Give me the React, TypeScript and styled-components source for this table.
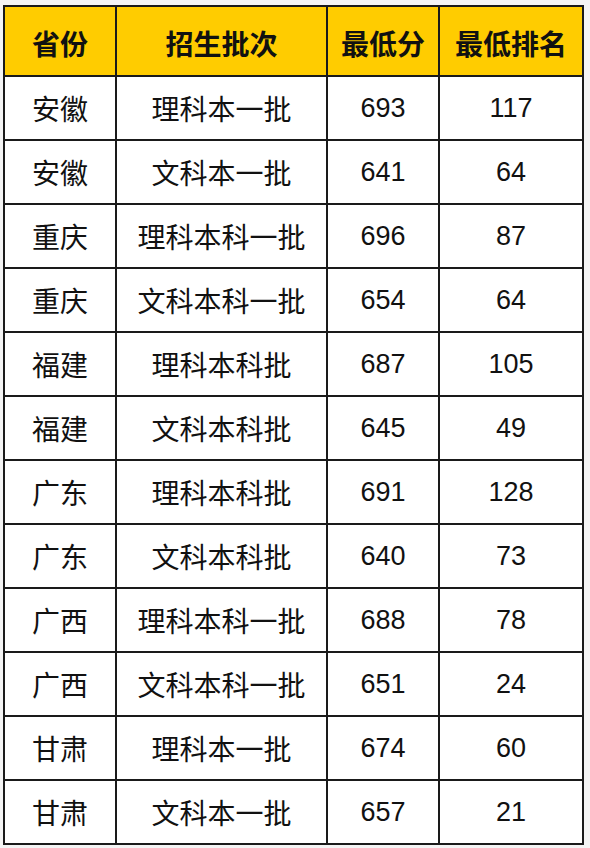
import styled, { createGlobalStyle } from 'styled-components';

const GlobalStyle = createGlobalStyle`
  html, body {
    margin: 0;
    padding: 0;
    background: #f4f4f4;
  }
  body {
    font-family: "Liberation Sans", "Noto Sans CJK SC", sans-serif;
  }
`;

const Page = styled.div`
  padding: 5px 6px 4px 3px;
  width: 590px;
  box-sizing: border-box;
`;

const Table = styled.table`
  border-collapse: collapse;
  width: 581px;
  background: #ffffff;
  border: 2px solid #1a1a1a;
`;

const HeadCell = styled.th`
  background: #ffcc00;
  height: 70px;
  padding: 4px 0 0;
  box-sizing: border-box;
  border: 2px solid #1a1a1a;
  font-size: 28px;
  font-weight: 700;
  color: #111;
  text-align: center;
`;

const Cell = styled.td<{ $num?: boolean }>`
  height: 64px;
  padding: 0;
  box-sizing: border-box;
  border: 2px solid #1a1a1a;
  font-size: ${(p) => (p.$num ? '27px' : '28px')};
  color: #111;
  text-align: center;
`;

const rows: [string, string, number, number][] = [
  ['安徽', '理科本一批', 693, 117],
  ['安徽', '文科本一批', 641, 64],
  ['重庆', '理科本科一批', 696, 87],
  ['重庆', '文科本科一批', 654, 64],
  ['福建', '理科本科批', 687, 105],
  ['福建', '文科本科批', 645, 49],
  ['广东', '理科本科批', 691, 128],
  ['广东', '文科本科批', 640, 73],
  ['广西', '理科本科一批', 688, 78],
  ['广西', '文科本科一批', 651, 24],
  ['甘肃', '理科本一批', 674, 60],
  ['甘肃', '文科本一批', 657, 21],
];

export default function App() {
  return (
    <Page>
      <GlobalStyle />
      <Table>
        <colgroup>
          <col style={{ width: 112 }} />
          <col style={{ width: 211 }} />
          <col style={{ width: 112 }} />
          <col style={{ width: 144 }} />
        </colgroup>
        <thead>
          <tr>
            <HeadCell>省份</HeadCell>
            <HeadCell>招生批次</HeadCell>
            <HeadCell>最低分</HeadCell>
            <HeadCell>最低排名</HeadCell>
          </tr>
        </thead>
        <tbody>
          {rows.map(([prov, batch, score, rank], i) => (
            <tr key={i}>
              <Cell>{prov}</Cell>
              <Cell>{batch}</Cell>
              <Cell $num>{score}</Cell>
              <Cell $num>{rank}</Cell>
            </tr>
          ))}
        </tbody>
      </Table>
    </Page>
  );
}
